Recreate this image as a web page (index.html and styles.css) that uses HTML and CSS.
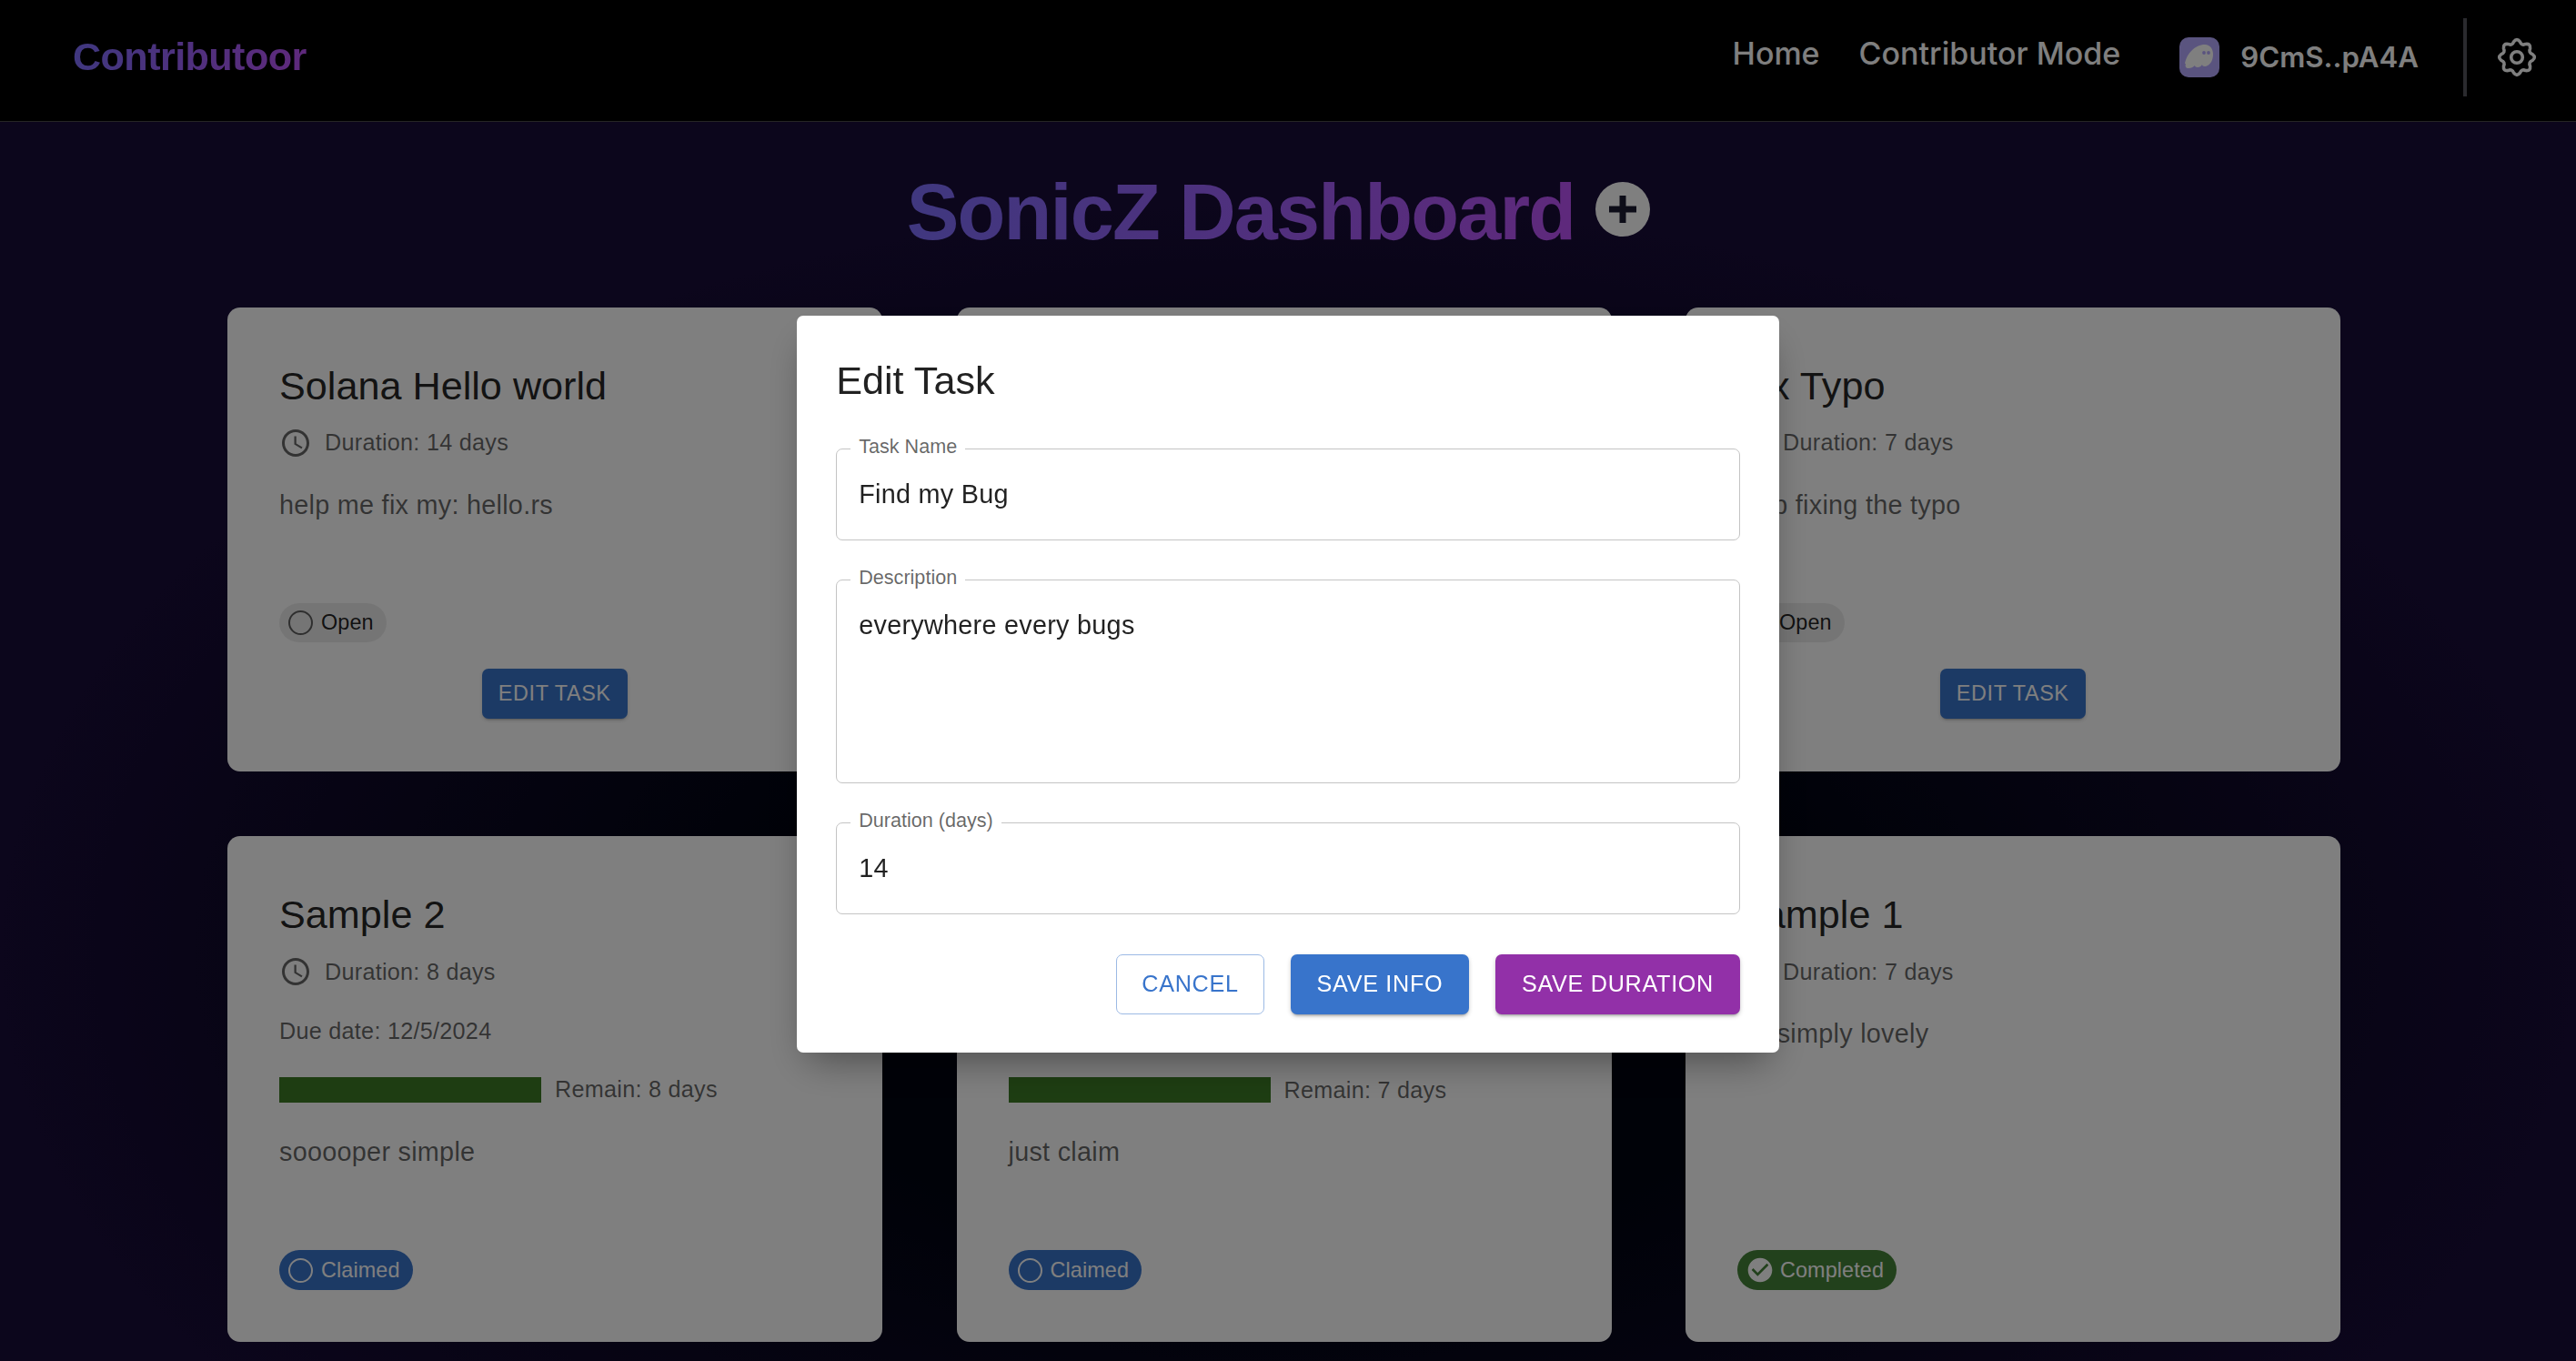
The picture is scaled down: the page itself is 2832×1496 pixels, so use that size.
FILE: index.html
```html
<!DOCTYPE html>
<html lang="en">
<head>
    <meta charset="UTF-8">
    <meta name="viewport" content="width=device-width, initial-scale=1.0">
    <title>Contributoor</title>
    <link rel="stylesheet" href="styles.css">
</head>
<body>
    <svg class="icon-sprite">
        <symbol id="clock-icon" viewBox="0 0 24 24">
            <path d="M11.99 2C6.47 2 2 6.48 2 12s4.47 10 9.99 10C17.52 22 22 17.52 22 12S17.52 2 11.99 2zM12 20c-4.42 0-8-3.58-8-8s3.58-8 8-8 8 3.58 8 8-3.58 8-8 8zm.5-13H11v6l5.25 3.15.75-1.23-4.5-2.67z"/>
        </symbol>
    </svg>

    <header class="navbar">
        <a class="logo">Contributoor</a>
        <nav class="nav-links">
            <a>Home</a>
            <a>Contributor Mode</a>
        </nav>
        <div class="wallet">
            <svg class="wallet-icon" viewBox="0 0 44 44">
                <rect width="44" height="44" rx="10" fill="#b5a8ff"/>
                <path d="M6 29C8 18 17 8 28 8c6 0 9 5 9 11 0 8-5 13-9 13-2 0-3-1-3-2-1 2-3 3-5 3-2 0-3-1-3-2-2 2-4 3-7 3-3 0-4-2-3-5z" fill="#fff"/>
                <circle cx="27" cy="17" r="1.9" fill="#b5a8ff"/>
                <circle cx="32" cy="17" r="1.9" fill="#b5a8ff"/>
            </svg>
            <span>9CmS..pA4A</span>
        </div>
        <div class="nav-divider"></div>
        <svg class="gear" viewBox="-22 -22 44 44" fill="none" stroke="#fff" stroke-width="3.6" stroke-linejoin="round">
            <path d="M3.41-17.16Q5.17-12.47 9.72-14.55Q15.2-15.2 14.55-9.72Q12.47-5.17 17.16-3.41Q21.5 0 17.16 3.41Q12.47 5.17 14.55 9.72Q15.2 15.2 9.72 14.55Q5.17 12.47 3.41 17.16Q0 21.5-3.41 17.16Q-5.17 12.47-9.72 14.55Q-15.2 15.2-14.55 9.72Q-12.47 5.17-17.16 3.41Q-21.5 0-17.16-3.41Q-12.47-5.17-14.55-9.72Q-15.2-15.2-9.72-14.55Q-5.17-12.47-3.41-17.16Q0-21.5 3.41-17.16z"/>
            <circle r="6.3"/>
        </svg>
    </header>

    <main class="dashboard">
        <div class="dashboard-head">
            <h1 class="dashboard-title">SonicZ Dashboard</h1>
            <button class="add-button">
                <svg viewBox="0 0 30 30"><path d="M11.5 0h7v11.5H30v7H18.5V30h-7V18.5H0v-7h11.5z"/></svg>
            </button>
        </div>

        <div class="task-grid">
            <div class="task-card">
                <h2 class="task-title">Solana Hello world</h2>
                <div class="task-duration">
                    <svg class="clock"><use href="#clock-icon"/></svg>
                    <span>Duration: 14 days</span>
                </div>
                <p class="task-desc">help me fix my: hello.rs</p>
                <div class="task-foot">
                    <span class="chip chip-open"><i class="chip-ring"></i>Open</span>
                </div>
                <button class="edit-button">Edit Task</button>
            </div>

            <!-- this one sits fully behind the dialog -->
            <div class="task-card"></div>

            <div class="task-card">
                <h2 class="task-title">Fix Typo</h2>
                <div class="task-duration">
                    <svg class="clock"><use href="#clock-icon"/></svg>
                    <span>Duration: 7 days</span>
                </div>
                <p class="task-desc">help fixing the typo</p>
                <div class="task-foot">
                    <span class="chip chip-open"><i class="chip-ring"></i>Open</span>
                </div>
                <button class="edit-button">Edit Task</button>
            </div>

            <div class="task-card">
                <h2 class="task-title">Sample 2</h2>
                <div class="task-duration">
                    <svg class="clock"><use href="#clock-icon"/></svg>
                    <span>Duration: 8 days</span>
                </div>
                <div class="task-due">Due date: 12/5/2024</div>
                <div class="task-remain">
                    <div class="remain-bar"></div>
                    <span>Remain: 8 days</span>
                </div>
                <p class="task-desc">sooooper simple</p>
                <div class="task-foot">
                    <span class="chip chip-claimed"><i class="chip-ring"></i>Claimed</span>
                </div>
            </div>

            <div class="task-card task-card-covered">
                <div class="task-remain">
                    <div class="remain-bar"></div>
                    <span>Remain: 7 days</span>
                </div>
                <p class="task-desc">just claim</p>
                <div class="task-foot">
                    <span class="chip chip-claimed"><i class="chip-ring"></i>Claimed</span>
                </div>
            </div>

            <div class="task-card">
                <h2 class="task-title">Sample 1</h2>
                <div class="task-duration">
                    <svg class="clock"><use href="#clock-icon"/></svg>
                    <span>Duration: 7 days</span>
                </div>
                <p class="task-desc">it's simply lovely</p>
                <div class="task-foot">
                    <span class="chip chip-completed">
                        <svg class="chip-check" viewBox="0 0 24 24"><path d="M12 2C6.48 2 2 6.48 2 12s4.48 10 10 10 10-4.48 10-10S17.52 2 12 2zm-2 15l-5-5 1.41-1.41L10 14.17l7.59-7.59L19 8l-9 9z"/></svg>
                        Completed
                    </span>
                </div>
            </div>
        </div>
    </main>

    <div class="backdrop">
        <div class="dialog">
            <h2 class="dialog-title">Edit Task</h2>
            <div class="dialog-body">
                <div class="field">
                    <label class="field-label">Task Name</label>
                    <div class="field-value">Find my Bug</div>
                </div>
                <div class="field field-area">
                    <label class="field-label">Description</label>
                    <div class="field-value">everywhere every bugs</div>
                </div>
                <div class="field">
                    <label class="field-label">Duration (days)</label>
                    <div class="field-value">14</div>
                </div>
            </div>
            <div class="dialog-actions">
                <button class="btn btn-outline">Cancel</button>
                <button class="btn btn-blue">Save Info</button>
                <button class="btn btn-purple">Save Duration</button>
            </div>
        </div>
    </div>
</body>
</html>
```

FILE: styles.css
```css
* {
    box-sizing: border-box;
}

html,
body {
    height: 100%;
}

body {
    margin: 0;
    overflow: hidden;
    font-family: "Liberation Sans", Arial, sans-serif;
    background-color: #180c38;
    background-image: radial-gradient(ellipse 50% 55% at 50% 70%, #000410 0%, #000410 40%, #180c38 100%);
}

.icon-sprite {
    display: none;
}

.navbar {
    display: flex;
    align-items: center;
    height: 134px;
    padding: 0 43px 8px 80px;
    background-color: #000;
    border-bottom: 1px solid #4a4a4a;
}

.logo {
    margin-right: auto;
    font-size: 43.2px;
    font-weight: 700;
    letter-spacing: -0.6px;
    background: linear-gradient(100deg, #7f70ff, #be52f8);
    -webkit-background-clip: text;
    background-clip: text;
    color: transparent;
}

.nav-links {
    display: flex;
    gap: 43px;
    margin-right: 65px;
    padding-bottom: 8px;
    font-family: Inter, sans-serif;
    font-size: 34px;
    font-weight: 500;
    color: #fff;
}

.wallet {
    display: flex;
    align-items: center;
    gap: 23px;
    font-family: Inter, sans-serif;
    font-size: 31.2px;
    font-weight: 600;
    color: #fff;
}

.wallet-icon {
    width: 44px;
    height: 44px;
}

.nav-divider {
    width: 4px;
    height: 86px;
    margin: 0 33px 0 49px;
    background-color: #55555c;
}

.gear {
    width: 44px;
    height: 44px;
}

.dashboard {
    padding: 0 259px 0 250px;
}

.dashboard-head {
    display: flex;
    align-items: center;
    justify-content: center;
    gap: 23px;
    height: 204px;
    margin-right: 12px;
    padding-bottom: 13px;
}

.dashboard-title {
    margin: 7px 0 0;
    font-size: 86.4px;
    font-weight: 700;
    letter-spacing: -1.8px;
    background: linear-gradient(100deg, #7f70ff, #be52f8);
    -webkit-background-clip: text;
    background-clip: text;
    color: transparent;
}

.add-button {
    display: flex;
    align-items: center;
    justify-content: center;
    width: 60px;
    height: 60px;
    padding: 0;
    border: none;
    border-radius: 50%;
    background-color: #fff;
}

.add-button svg {
    width: 30px;
    height: 30px;
    fill: #1a1a30;
}

.task-grid {
    display: grid;
    grid-template-columns: repeat(3, 720px);
    column-gap: 81.5px;
    row-gap: 71.5px;
}

.task-card {
    display: flex;
    flex-direction: column;
    padding: 57.6px 57.6px 57.6px 57px;
    background-color: #fff;
    border-radius: 14px;
}

.task-title {
    margin: 0 0 15.6px;
    font-size: 43.2px;
    font-weight: 400;
    line-height: 57.6px;
    color: rgba(0, 0, 0, 0.87);
}

.task-duration {
    display: flex;
    align-items: center;
    gap: 14px;
    height: 36px;
    margin-bottom: 28.8px;
    font-size: 25.2px;
    letter-spacing: 0.27px;
    color: rgba(0, 0, 0, 0.6);
}

.clock {
    width: 36px;
    height: 36px;
    fill: rgba(0, 0, 0, 0.6);
}

.task-due {
    height: 36px;
    margin-bottom: 28.8px;
    font-size: 25.2px;
    line-height: 36px;
    letter-spacing: 0.27px;
    color: rgba(0, 0, 0, 0.6);
}

.task-remain {
    display: flex;
    align-items: center;
    gap: 15px;
    height: 36px;
    margin-bottom: 28.8px;
    font-size: 25.2px;
    letter-spacing: 0.27px;
    color: rgba(0, 0, 0, 0.6);
}

/* the dialog hides title, duration and due date, keep the rows below in place */
.task-card-covered .task-remain {
    margin-top: 203px;
}

.remain-bar {
    width: 288px;
    height: 28px;
    background-color: #3c7b25;
}

.task-desc {
    min-height: 108px;
    margin: 0 0 21.6px;
    font-size: 28.8px;
    line-height: 43.2px;
    letter-spacing: 0.27px;
    color: rgba(0, 0, 0, 0.6);
}

.task-foot {
    display: flex;
    margin-top: auto;
}

.chip {
    display: inline-flex;
    align-items: center;
    gap: 9px;
    height: 43.2px;
    padding: 0 14px 0 10px;
    border-radius: 22px;
    font-size: 23.4px;
    letter-spacing: 0.1px;
}

.chip-open {
    background-color: rgba(0, 0, 0, 0.08);
    color: rgba(0, 0, 0, 0.87);
}

.chip-claimed {
    background-color: #3874cb;
    color: #fff;
}

.chip-completed {
    gap: 6px;
    padding-left: 9px;
    background-color: #458238;
    color: #fff;
}

.chip-ring {
    width: 27px;
    height: 27px;
    border: 2.5px solid currentColor;
    border-radius: 50%;
}

.chip-open .chip-ring {
    color: rgba(0, 0, 0, 0.6);
}

.chip-check {
    width: 32px;
    height: 32px;
    fill: #fff;
}

.edit-button {
    align-self: center;
    height: 55px;
    margin-top: 29px;
    padding: 0 18px;
    border: none;
    border-radius: 7px;
    background-color: #3874cb;
    box-shadow: 0 3px 2px -2px rgba(0, 0, 0, 0.2), 0 2px 4px rgba(0, 0, 0, 0.14);
    font-family: "Liberation Sans", Arial, sans-serif;
    font-size: 23.4px;
    letter-spacing: 0.6px;
    text-transform: uppercase;
    color: #fff;
}

.backdrop {
    position: fixed;
    inset: 0;
    background-color: rgba(0, 0, 0, 0.5);
}

.dialog {
    position: absolute;
    left: 876px;
    top: 347px;
    width: 1080px;
    height: 810px;
    background-color: #fff;
    border-radius: 7px;
    box-shadow: 0 20px 40px -12px rgba(0, 0, 0, 0.4);
}

.dialog-title {
    margin: 0;
    padding: 42.5px 43.2px 0;
    font-size: 43.2px;
    font-weight: 400;
    line-height: 57.6px;
    color: rgba(0, 0, 0, 0.87);
}

.dialog-body {
    display: flex;
    flex-direction: column;
    gap: 43.2px;
    padding: 46px 43.2px 0;
}

.field {
    position: relative;
    height: 100.8px;
    padding: 28px 24px;
    border: 1px solid #c4c4c4;
    border-radius: 7px;
}

.field-area {
    height: 224px;
}

.field-label {
    position: absolute;
    left: 15px;
    top: -16px;
    padding: 0 9px;
    background-color: #fff;
    font-size: 21.6px;
    line-height: 25px;
    color: rgba(0, 0, 0, 0.6);
}

.field-value {
    font-size: 28.8px;
    line-height: 43.2px;
    letter-spacing: 0.27px;
    color: rgba(0, 0, 0, 0.87);
}

.dialog-actions {
    display: flex;
    justify-content: flex-end;
    gap: 29px;
    padding: 44px 43.2px 0;
}

.btn {
    height: 66px;
    padding: 0 28.8px 2px;
    border: none;
    border-radius: 7px;
    font-family: "Liberation Sans", Arial, sans-serif;
    font-size: 25.2px;
    letter-spacing: 0.7px;
    text-transform: uppercase;
}

.btn-outline {
    padding: 0 27px 2px;
    border: 1px solid #9cbae5;
    background-color: #fff;
    color: #3874cb;
}

.btn-blue {
    background-color: #3874cb;
    box-shadow: 0 3px 3px -2px rgba(0, 0, 0, 0.3), 0 2px 5px rgba(0, 0, 0, 0.2);
    color: #fff;
}

.btn-purple {
    background-color: #9230a8;
    box-shadow: 0 3px 3px -2px rgba(0, 0, 0, 0.3), 0 2px 5px rgba(0, 0, 0, 0.2);
    color: #fff;
}
```
